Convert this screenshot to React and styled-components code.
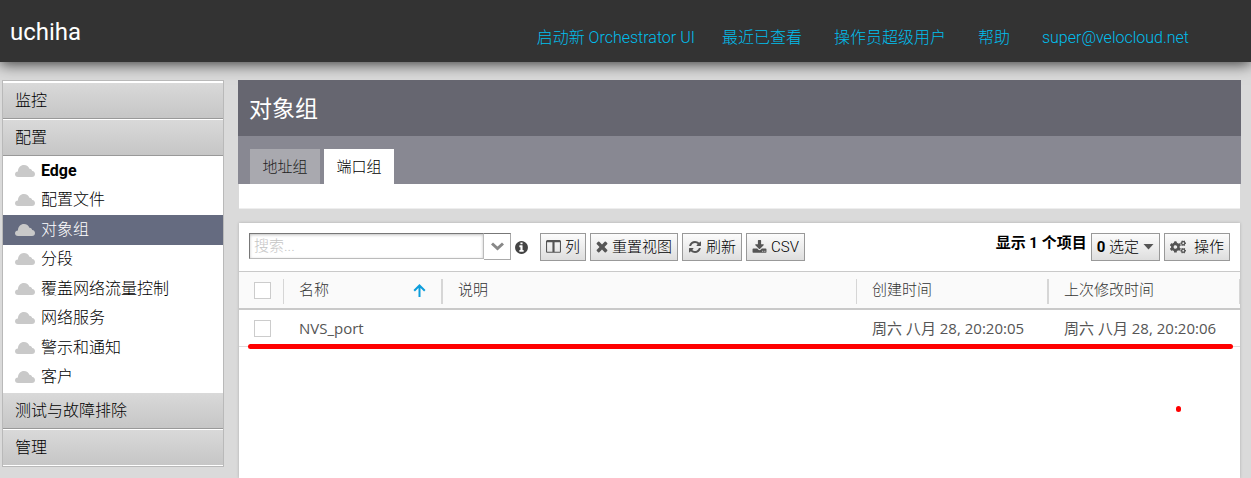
import React from "react";
import styled, { createGlobalStyle, css } from "styled-components";
import { FaCogs } from "react-icons/fa";

const Global = createGlobalStyle`
  * { box-sizing: border-box; }
  html, body, #root { height: 100%; }
  body {
    margin: 0;
    background: #dadada;
    color: #000;
    font: 400 16px/20px Roboto, "Noto Sans CJK SC", sans-serif;
  }
  button, input { font: inherit; }
  a { color: inherit; text-decoration: none; }
`;

const Page = styled.div`
  min-height: 100%;
  display: flex;
  flex-direction: column;
`;

const TopBar = styled.header`
  height: 62px;
  padding: 0 62px 0 10px;
  display: flex;
  align-items: center;
  justify-content: space-between;
  background: #333;
  box-shadow: 0 2px 14px rgba(0, 0, 0, 0.75);
`;

const Brand = styled.div`
  color: #fff;
  font-size: 24px;
  line-height: 28px;
  padding-top: 2px;
`;

const TopNav = styled.nav`
  display: flex;
  gap: 32px;
  padding-top: 14px;
  color: #00bfee;
  font-weight: 300;
  a:first-child { margin-right: -5px; }
`;

const Body = styled.div`
  flex: 1;
  display: flex;
  align-items: stretch;
  gap: 14px;
  padding: 18px 10px 0 2px;
`;

const Sidebar = styled.aside`
  flex: 0 0 222px;
  align-self: flex-start;
  padding-top: 1px;
  background: #fff;
  border: 1px solid #b9b9b9;
`;

const SectionHead = styled.button`
  display: block;
  width: 100%;
  height: 37px;
  padding: 0 12px;
  border: 0;
  border-top: 1px solid #fff;
  border-bottom: 1px solid #999;
  background: linear-gradient(#d9d9d9, #c6c6c6);
  color: #000;
  text-align: left;
  font-weight: 300;
  &:last-child { border-bottom-color: #fff; }
`;

const Menu = styled.ul`
  display: grid;
  grid-auto-rows: 1fr;
  height: 236px;
  margin: 0;
  padding: 0;
  list-style: none;
`;

const MenuLink = styled.a`
  display: flex;
  align-items: center;
  gap: 6px;
  height: 100%;
  padding-left: 12px;
  font-weight: ${(p) => (p.$bold ? 700 : 300)};
  ${(p) => p.$active && css`
    background: #656b80;
    color: #fff;
  `}
`;

const Main = styled.main`
  flex: 1;
  min-width: 0;
  display: flex;
  flex-direction: column;
`;

const TitleBar = styled.div`
  height: 56px;
  padding: 4px 11px 0;
  display: flex;
  align-items: center;
  background: #666670;
`;

const Title = styled.h1`
  margin: 0;
  color: #fff;
  font-size: 23px;
  line-height: 32px;
  font-weight: 400;
`;

const Tabs = styled.div`
  height: 48px;
  padding: 13px 12px 0;
  display: flex;
  gap: 4px;
  background: #888892;
`;

const Tab = styled.button`
  width: 70px;
  padding: 0;
  border: 0;
  font-size: 15px;
  font-weight: 300;
  color: ${(p) => (p.$active ? "#000" : "#222")};
  background: ${(p) => (p.$active ? "#fff" : "#a9a9af")};
`;

const TabBody = styled.div`
  height: 25px;
  margin: 0 1px 14px;
  background: #fff;
  border-bottom: 1px solid #eee;
`;

const Panel = styled.section`
  position: relative;
  flex: 1;
  margin: 0 1px;
  background: #fff;
  box-shadow: 0 0 3px rgba(0, 0, 0, 0.2);
`;

const Toolbar = styled.div`
  height: 48px;
  padding: 10px;
  display: flex;
  gap: 4px;
`;

const SearchBox = styled.div`
  display: flex;
  width: 262px;
`;

const SearchInput = styled.input`
  flex: 1;
  min-width: 0;
  height: 26px;
  padding: 0 4px;
  border: 1px solid #777;
  border-right-color: #bbb;
  border-bottom-color: #bbb;
  border-radius: 0;
  box-shadow: inset 0 1px 3px rgba(0, 0, 0, 0.25);
  font-size: 15px;
  font-weight: 300;
  &::placeholder { color: #c4c4c4; opacity: 1; }
`;

const SearchToggle = styled.button`
  width: 27px;
  height: 27px;
  padding: 0;
  border: 1px solid #aaa;
  border-left: 0;
  border-top-color: #777;
  background: #fff;
  display: flex;
  align-items: center;
  justify-content: center;
`;

const InfoButton = styled.button`
  width: 15px;
  height: 28px;
  margin: 0 7px 0 -1px;
  padding: 0;
  border: 0;
  background: none;
  display: flex;
  align-items: center;
  color: #444;
`;

const ToolButton = styled.button`
  height: 28px;
  padding: 0 5px;
  display: flex;
  align-items: center;
  gap: ${(p) => p.$gap || 4}px;
  border: 1px solid #999;
  background: linear-gradient(#fcfcfc, #dedede);
  color: #000;
  font-size: 15px;
  font-weight: 300;
  white-space: nowrap;
  svg { color: #555; flex: none; }
  b { font-weight: 700; }
`;

const Count = styled.div`
  margin-left: auto;
  font-size: 15px;
  font-weight: 700;
  white-space: nowrap;
`;

const Grid = styled.table`
  width: 100%;
  table-layout: fixed;
  border-collapse: separate;
  border-spacing: 0;
  border-top: 1px solid #c9c9c9;
  color: #333;
  font-size: 15px;
  font-weight: 300;
`;

const Col = styled.col`
  width: ${(p) => p.$w};
`;

const Th = styled.th`
  height: 38px;
  padding: 0 0 0 15px;
  border-bottom: 2px solid #c9c9c9;
  background: #fafafa linear-gradient(#d6d6d6, #d6d6d6) right 7px / ${(p) => (p.$thin ? 1 : 2)}px 25px no-repeat;
  text-align: left;
  font-weight: 300;
`;

const HeadLabel = styled.div`
  display: flex;
  align-items: center;
  justify-content: space-between;
  padding-right: 17px;
`;

const Td = styled.td`
  height: 37px;
  padding: 0 0 0 15px;
  border-bottom: 1px solid #ddd;
  color: #555;
  font-family: "Open Sans", "Noto Sans CJK SC", sans-serif;
  font-weight: 400;
  white-space: nowrap;
`;

const Check = styled.input`
  appearance: none;
  display: block;
  width: 17px;
  height: 17px;
  margin: 0;
  border: 1px solid #ccc;
  background: #fff;
  &:checked { background: #999; }
`;

const RedLine = styled.div`
  position: absolute;
  left: 9px;
  right: 7px;
  top: 121px;
  height: 5px;
  border-radius: 3px;
  background: #f00;
`;

const RedDot = styled.div`
  position: absolute;
  right: 59px;
  top: 183px;
  width: 5px;
  height: 6px;
  border-radius: 3px;
  background: #f00;
`;

const glyphs = {
  columns:
    "M160 1408h608v-1152h-640v1120q0 13 9.5 22.5t22.5 9.5zm1504-32v-1120h-640v1152h608q13 0 22.5-9.5t9.5-22.5zm128-1216v1216q0 66-47 113t-113 47h-1472q-66 0-113-47t-47-113v-1216q0-66 47-113t113-47h1472q66 0 113 47t47 113z",
  times:
    "M1490 1322q0 40-28 68l-136 136q-28 28-68 28t-68-28l-294-294-294 294q-28 28-68 28t-68-28l-136-136q-28-28-28-68t28-68l294-294-294-294q-28-28-28-68t28-68l136-136q28-28 68-28t68 28l294 294 294-294q28-28 68-28t68 28l136 136q28 28 28 68t-28 68l-294 294 294 294q28 28 28 68z",
  refresh:
    "M1639 1056q0 5-1 7-64 268-268 434.5t-478 166.5q-146 0-282.5-55t-243.5-157l-129 129q-19 19-45 19t-45-19-19-45v-448q0-26 19-45t45-19h448q26 0 45 19t19 45-19 45l-137 137q71 66 161 102t187 36q134 0 250-65t186-179q11-17 53-117 8-23 30-23h192q13 0 22.5 9.5t9.5 22.5zm25-800v448q0 26-19 45t-45 19h-448q-26 0-45-19t-19-45 19-45l138-138q-148-137-349-137-134 0-250 65t-186 179q-11 17-53 117-8 23-30 23h-199q-13 0-22.5-9.5t-9.5-22.5v-7q65-268 270-434.5t480-166.5q146 0 284 55.5t245 156.5l130-129q19-19 45-19t45 19 19 45z",
  download:
    "M1344 1344q0-26-19-45t-45-19-45 19-19 45 19 45 45 19 45-19 19-45zm256 0q0-26-19-45t-45-19-45 19-19 45 19 45 45 19 45-19 19-45zm128-224v320q0 40-28 68t-68 28h-1472q-40 0-68-28t-28-68v-320q0-40 28-68t68-28h465l135 136q58 56 136 56t136-56l136-136h464q40 0 68 28t28 68zm-325-569q17 41-14 70l-448 448q-18 19-45 19t-45-19l-448-448q-31-29-14-70 17-39 59-39h256v-448q0-26 19-45t45-19h256q26 0 45 19t19 45v448h256q42 0 59 39z",
  info:
    "M1152 1376v-160q0-14-9-23t-23-9h-96v-512q0-14-9-23t-23-9h-320q-14 0-23 9t-9 23v160q0 14 9 23t23 9h96v320h-96q-14 0-23 9t-9 23v160q0 14 9 23t23 9h448q14 0 23-9t9-23zm-128-896v-160q0-14-9-23t-23-9h-192q-14 0-23 9t-9 23v160q0 14 9 23t23 9h192q14 0 23-9t9-23zm640 416q0 209-103 385.5t-279.5 279.5-385.5 103-385.5-103-279.5-279.5-103-385.5 103-385.5 279.5-279.5 385.5-103 385.5 103 279.5 279.5 103 385.5z",
};

const Glyph = ({ name, size = 16, box = "0 0 1792 1792" }) => (
  <svg width={size} height={size} viewBox={box} fill="currentColor" aria-hidden="true">
    <path d={glyphs[name]} />
  </svg>
);

const Cloud = () => (
  <svg width="20" height="12" viewBox="0 0 20 12" fill="#c9c9c9" aria-hidden="true">
    <path d="M3 12C1 12 0 10.8 0 9.3C0 7.600 1.200 6.500 2.900 6.400C3.100 2.600 5.600 0 9 0C11.600 0 13.700 1.400 14.400 3.800C16 3.700 17 4.700 17.200 6.100C19 6.300 20 7.500 20 9.100C20 10.900 18.900 12 17 12Z" />
  </svg>
);

const menu = [
  { label: "Edge", bold: true },
  { label: "配置文件" },
  { label: "对象组", active: true },
  { label: "分段" },
  { label: "覆盖网络流量控制" },
  { label: "网络服务" },
  { label: "警示和通知" },
  { label: "客户" },
];

const topLinks = ["启动新 Orchestrator UI", "最近已查看", "操作员超级用户", "帮助", "super@velocloud.net"];

export default function App() {
  return (
    <Page lang="zh-CN">
      <Global />
      <TopBar>
        <Brand>uchiha</Brand>
        <TopNav>
          {topLinks.map((t) => (
            <a key={t} href="#">{t}</a>
          ))}
        </TopNav>
      </TopBar>
      <Body>
        <Sidebar>
          <SectionHead>监控</SectionHead>
          <SectionHead>配置</SectionHead>
          <Menu>
            {menu.map((m) => (
              <li key={m.label}>
                <MenuLink href="#" $bold={m.bold} $active={m.active}>
                  <Cloud />
                  {m.label}
                </MenuLink>
              </li>
            ))}
          </Menu>
          <SectionHead>测试与故障排除</SectionHead>
          <SectionHead>管理</SectionHead>
        </Sidebar>
        <Main>
          <TitleBar>
            <Title>对象组</Title>
          </TitleBar>
          <Tabs>
            <Tab>地址组</Tab>
            <Tab $active>端口组</Tab>
          </Tabs>
          <TabBody />
          <Panel>
            <Toolbar>
              <SearchBox>
                <SearchInput type="text" placeholder="搜索..." aria-label="搜索" />
                <SearchToggle aria-label="搜索选项">
                  <svg width="13" height="9" viewBox="0 0 13 9" fill="none" stroke="#888" strokeWidth="3">
                    <path d="M1 1.500L6.500 6.500L12 1.500" />
                  </svg>
                </SearchToggle>
              </SearchBox>
              <InfoButton aria-label="信息"><Glyph name="info" size={15} /></InfoButton>
              <ToolButton><Glyph name="columns" size={15} />列</ToolButton>
              <ToolButton><Glyph name="times" size={12} box="238 302 1316 1316" />重置视图</ToolButton>
              <ToolButton><Glyph name="refresh" size={14} />刷新</ToolButton>
              <ToolButton><Glyph name="download" size={15} />CSV</ToolButton>
              <Count>显示 1 个项目</Count>
              <ToolButton>
                <span><b>0</b> 选定</span>
                <svg width="11" height="6" viewBox="0 0 11 6" fill="currentColor"><path d="M0.500 0H10.500L5.500 5.500Z" /></svg>
              </ToolButton>
              <ToolButton $gap={8}><FaCogs size={16} />操作</ToolButton>
            </Toolbar>
            <Grid>
              <colgroup>
                <Col $w="45px" />
                <Col $w="159px" />
                <Col />
                <Col $w="192px" />
                <Col $w="191px" />
              </colgroup>
              <thead>
                <tr>
                  <Th $thin><Check type="checkbox" aria-label="全选" /></Th>
                  <Th>
                    <HeadLabel>
                      名称
                      <svg width="13" height="13" viewBox="0 0 13 13" fill="none" stroke="#0d9ddb" strokeWidth="2">
                        <path d="M6.500 13V2M1.200 6.800L6.500 1.500L11.800 6.800" />
                      </svg>
                    </HeadLabel>
                  </Th>
                  <Th $thin>说明</Th>
                  <Th>创建时间</Th>
                  <Th $thin>上次修改时间</Th>
                </tr>
              </thead>
              <tbody>
                <tr>
                  <Td><Check type="checkbox" aria-label="选择 NVS_port" /></Td>
                  <Td>NVS_port</Td>
                  <Td />
                  <Td>周六 八月 28, 20:20:05</Td>
                  <Td>周六 八月 28, 20:20:06</Td>
                </tr>
              </tbody>
            </Grid>
            <RedLine />
            <RedDot />
          </Panel>
        </Main>
      </Body>
    </Page>
  );
}
